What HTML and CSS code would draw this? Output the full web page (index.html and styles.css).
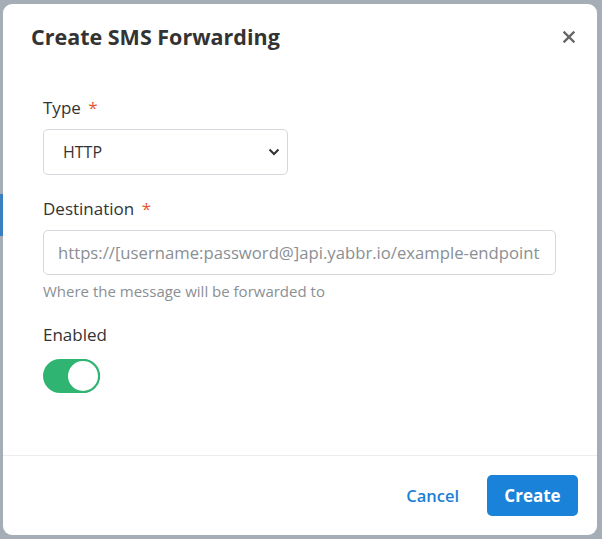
FILE: index.html
```html
<!DOCTYPE html>
<html lang="en">
<head>
<meta charset="utf-8">
<title>Create SMS Forwarding</title>
<link rel="stylesheet" href="styles.css">
</head>
<body>
<div class="backdrop">
  <div class="edge-left"><span class="edge-blue"></span></div>
  <div class="modal">
    <div class="modal-header">
      <h2 class="modal-title">Create SMS Forwarding</h2>
      <button class="close" aria-label="Close">
        <svg width="12" height="12" viewBox="0 0 12 12"><path d="M1.5 1.5 L10.5 10.5 M10.5 1.5 L1.5 10.5" stroke="#666" stroke-width="2.4" stroke-linecap="square"/></svg>
      </button>
    </div>
    <div class="modal-body">
      <div class="field">
        <label class="label">Type <span class="req">*</span></label>
        <div class="select">
          <span>HTTP</span>
          <svg width="12" height="8" viewBox="0 0 12 8"><path d="M1.5 1.5 L6 6 L10.5 1.5" fill="none" stroke="#333" stroke-width="2"/></svg>
        </div>
      </div>
      <div class="field">
        <label class="label">Destination <span class="req">*</span></label>
        <div class="input">https://[username:password@]api.yabbr.io/example-endpoint</div>
        <div class="help">Where the message will be forwarded to</div>
      </div>
      <div class="field">
        <label class="label">Enabled</label>
        <div class="toggle"><span class="knob"></span></div>
      </div>
    </div>
    <div class="modal-footer">
      <button class="btn-link">Cancel</button>
      <button class="btn-primary">Create</button>
    </div>
  </div>
</div>
</body>
</html>
```
FILE: styles.css
```css
html, body {
  margin: 0;
  padding: 0;
  height: 100%;
}
body {
  background: #a5adb6;
  font-family: "Open Sans", "Noto Sans", sans-serif;
  color: #333;
}
.backdrop {
  display: flex;
  padding: 4px 5px 4px 0;
  height: 531px;
}
.edge-left {
  width: 3px;
  display: flex;
  flex-direction: column;
  padding-top: 190px;
}
.edge-blue {
  display: block;
  height: 42px;
  background: #3a7fc0;
}
.modal {
  flex: 1;
  background: #fff;
  border-radius: 9px;
  display: flex;
  flex-direction: column;
}
.modal-header {
  display: flex;
  align-items: center;
  justify-content: space-between;
  padding: 18px 21px 0 28px;
}
.modal-title {
  margin: 0;
  font-size: 21.5px;
  line-height: 30px;
  font-weight: 700;
  color: #333;
}
.close {
  border: 0;
  background: none;
  padding: 0;
  width: 14px;
  height: 14px;
  display: flex;
  align-items: center;
  justify-content: center;
}
.modal-body {
  flex: 1;
  padding: 44px 40px 0 40px;
  display: flex;
  flex-direction: column;
  gap: 22px;
}
.field {
  display: flex;
  flex-direction: column;
}
.label {
  font-size: 17px;
  line-height: 24px;
  color: #333;
  margin-bottom: 9px;
}
.req {
  color: #e4572e;
  margin-left: 3px;
}
.select {
  width: 245px;
  height: 46px;
  box-sizing: border-box;
  border: 1px solid #d5d9de;
  border-radius: 5px;
  display: flex;
  align-items: center;
  justify-content: space-between;
  padding: 0 7px 0 19px;
  font-size: 16px;
  color: #333;
}
.input {
  width: 513px;
  height: 45px;
  box-sizing: border-box;
  border: 1px solid #d5d9de;
  border-radius: 5px;
  display: flex;
  align-items: center;
  padding: 0 14px;
  font-size: 16.7px;
  color: #8a8f94;
  white-space: nowrap;
}
.help {
  font-size: 15px;
  line-height: 20px;
  color: #8a8f94;
  margin-top: 6px;
}
.toggle {
  width: 57px;
  height: 34px;
  box-sizing: border-box;
  border-radius: 17px;
  background: #2fb571;
  display: flex;
  justify-content: flex-end;
  margin-top: 3px;
}
.knob {
  width: 34px;
  height: 34px;
  box-sizing: border-box;
  border-radius: 50%;
  background: #fff;
  border: 2px solid #2fb571;
}
.modal-footer {
  border-top: 1px solid #ececec;
  height: 80px;
  box-sizing: border-box;
  display: flex;
  align-items: center;
  justify-content: flex-end;
  gap: 12px;
  padding: 0 19px 0 0;
}
.btn-link {
  border: 0;
  background: none;
  font-family: inherit;
  font-size: 16.5px;
  font-weight: 600;
  color: #1c7fd6;
  padding: 10px 16px;
}
.btn-primary {
  border: 0;
  background: #1a82d9;
  color: #fff;
  font-family: inherit;
  font-size: 17px;
  font-weight: 700;
  border-radius: 5px;
  width: 91px;
  height: 41px;
}
```
